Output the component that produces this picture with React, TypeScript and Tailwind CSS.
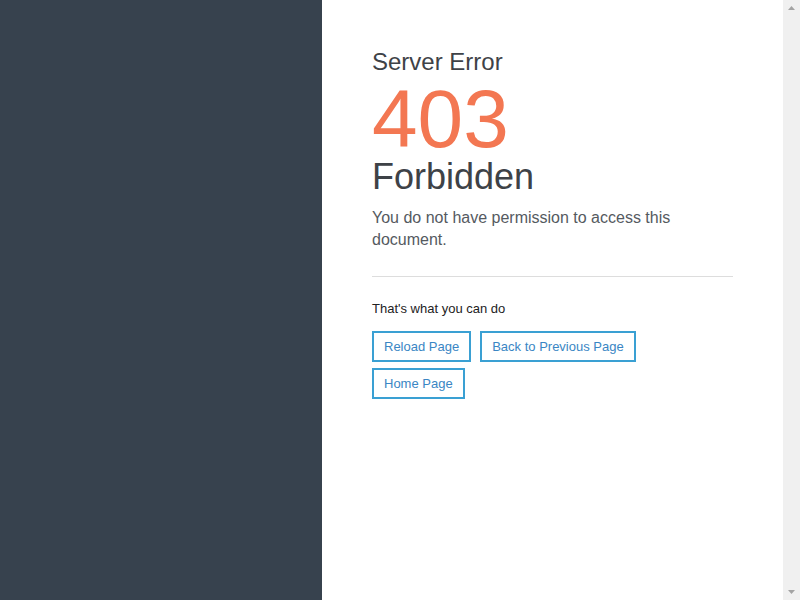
import React from "react";

export default function App() {
  return (
    <div
      className="flex h-screen w-full overflow-hidden bg-white"
      style={{ fontFamily: '"Liberation Sans", Arial, sans-serif' }}
    >
      <div className="w-[322px] shrink-0 bg-[#37424e]" />
      <div className="min-w-0 flex-1 bg-white px-[50px] pt-[48px]">
        <div className="text-[24px] leading-[28px] text-[#3e4247]">Server Error</div>
        <div className="mt-[3px] text-[82px] leading-[80px] text-[#f37752]">403</div>
        <div className="text-[36px] leading-[36px] text-[#3e4247]">Forbidden</div>
        <p className="mt-[12px] text-[16px] leading-[22px] text-[#555a5f]">
          You do not have permission to access this document.
        </p>
        <div className="mt-[25px] border-t border-[#dddddd]" />
        <div className="mt-[22px] text-[13px] leading-[20px] text-[#222222]">
          That's what you can do
        </div>
        <div className="mt-[12px] flex flex-wrap gap-x-[9px] gap-y-[6px]">
          {["Reload Page", "Back to Previous Page", "Home Page"].map((t) => (
            <button
              key={t}
              className="border-2 border-[#3aa0d3] bg-white px-[10px] py-[5px] text-[13px] leading-[17px] text-[#3a86c4]"
            >
              {t}
            </button>
          ))}
        </div>
      </div>
      <div className="flex w-[17px] shrink-0 flex-col items-center justify-between bg-[#f0f0f0] py-[6px]">
        <svg width="7" height="4" viewBox="0 0 7 4">
          <path d="M3.5 0 L7 4 L0 4 Z" fill="#a3a3a3" />
        </svg>
        <svg width="7" height="4" viewBox="0 0 7 4">
          <path d="M0 0 L7 0 L3.5 4 Z" fill="#a3a3a3" />
        </svg>
      </div>
    </div>
  );
}
